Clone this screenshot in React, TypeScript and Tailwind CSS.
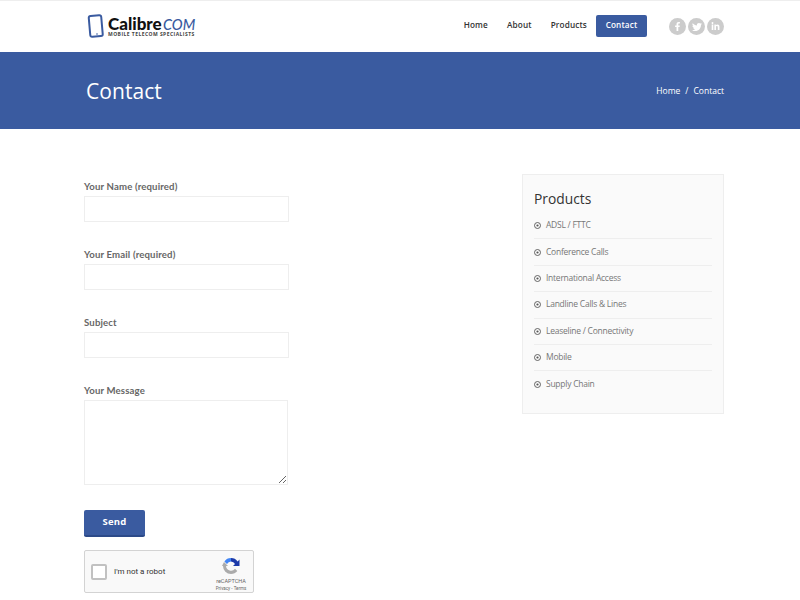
import { FaFacebookF, FaLinkedinIn, FaTwitter } from "react-icons/fa"

const links = ["ADSL / FTTC", "Conference Calls", "International Access", "Landline Calls & Lines", "Leaseline / Connectivity", "Mobile", "Supply Chain"]

function Field({ label, area }: { label: string; area?: boolean }) {
  return (
    <div className="mb-[25px]">
      <label className="block text-[9.6px] leading-[16px] h-[14px] font-bold text-[#666] mb-[3px] tracking-[0.15px] font-['Lato',sans-serif]">{label}</label>
      {area ? (
        <textarea className="block w-[204px] h-[85px] border border-[#eeeeee] bg-white outline-none" />
      ) : (
        <input className="block w-[205px] h-[26px] border border-[#eeeeee] bg-white outline-none" />
      )}
    </div>
  )
}

function Social({ children }: { children: React.ReactNode }) {
  return <div className="w-[17px] h-[17px] rounded-full bg-[#cccccc] flex items-center justify-center text-white">{children}</div>
}

export default function App() {
  return (
    <div className="w-[800px] h-[600px] overflow-hidden bg-white font-['Open_Sans',sans-serif]">
      <header className="h-[52px] border-t border-[#eeeeee] flex items-center pl-[87px] pr-[76px]">
        <div className="flex items-center w-[109px]">
          <svg width="18" height="24" viewBox="0 0 18 24" className="mr-[3px] -mt-px shrink-0">
            <rect x="2.5" y="1.5" width="12.5" height="21" rx="2" transform="rotate(-5 9 12)" fill="#ffffff" stroke="#3a5ba0" strokeWidth="2" />
            <circle cx="10" cy="20" r="0.8" fill="#3a5ba0" />
          </svg>
          <div className="flex flex-col">
            <div className="flex items-baseline leading-[14px] h-[14px]">
              <span className="text-[17px] font-black text-[#111] font-['Lato',sans-serif] leading-[14px] w-[55px]">Calibre</span>
              <span className="text-[14.5px] italic text-[#3a5ba0] font-['Lato',sans-serif] font-medium leading-[14px]">COM</span>
            </div>
            <span className="text-[5px] leading-[6px] h-[6px] font-bold text-[#444] whitespace-nowrap tracking-[0.45px]">MOBILE TELECOM SPECIALISTS</span>
          </div>
        </div>
        <nav className="ml-auto flex items-center text-[8.2px] font-semibold text-[#333] tracking-[0.15px] mb-[2px]">
          <span className="mr-[19px]">Home</span>
          <span className="mr-[19px]">About</span>
          <span className="mr-[9px]">Products</span>
          <span className="w-[51px] h-[22px] bg-[#3a5ba0] text-white rounded-[2px] flex items-center justify-center">Contact</span>
        </nav>
        <div className="flex ml-[22px] gap-[2px]">
          <Social><FaFacebookF size={9} /></Social>
          <Social><FaTwitter size={10} /></Social>
          <Social><FaLinkedinIn size={9} /></Social>
        </div>
      </header>
      <section className="h-[77px] pt-[2px] bg-[#3a5ba0] flex items-center justify-between pl-[86px] pr-[76px]">
        <h1 className="text-[21px] text-white tracking-[0.05px]">Contact</h1>
        <div className="text-[8.5px] text-white flex gap-[5px]">
          <span>Home</span><span>/</span><span>Contact</span>
        </div>
      </section>
      <main className="flex justify-between pl-[84px] pr-[76px] pt-[45px]">
        <form className="pt-[5px]">
          <Field label="Your Name (required)" />
          <Field label="Your Email (required)" />
          <Field label="Subject" />
          <Field label="Your Message" area />
          <button type="button" className="w-[61px] h-[27px] bg-[#3a5ba0] border-b-2 border-[#2c4a88] rounded-[2px] text-white text-[9.5px] font-bold tracking-[0.2px] block">Send</button>
          <div className="mt-[13px] w-[170px] h-[43px] bg-[#f9f9f9] border border-[#d3d3d3] rounded-[2px] flex items-center pl-[6px] pr-[6px]">
            <div className="w-4 h-4 bg-white border-2 border-[#c1c1c1] rounded-[2px]" />
            <span className="ml-[7px] text-[8px] text-[#333] font-['Roboto',sans-serif]">I'm not a robot</span>
            <div className="ml-auto flex flex-col items-center w-[32px] mt-[5px]">
              <svg width="18" height="18" viewBox="0 0 18 18" className="mb-[2px]">
                <path d="M9 1a8 8 0 0 1 6.6 3.4L17.5 2.5v6.5h-6.500l2-2A5 5 0 0 0 9 4.500z" fill="#1c3aa9" />
                <path d="M9 1a8 8 0 0 0-6.600 3.400L5 7a5 5 0 0 1 4-2.500z" fill="#4285f4" />
                <path d="M1 9a8 8 0 0 0 8 8c2.600 0 4.800-1.200 6.300-3l-2.300-2.300A5 5 0 0 1 4 9h2L2 5 0 9z" fill="#ababab" />
              </svg>
              <span className="text-[5.500px] leading-[8px] text-[#666] font-['Roboto',sans-serif] mb-px">reCAPTCHA</span>
              <span className="text-[4.500px] leading-[6px] text-[#666] font-['Roboto',sans-serif]">Privacy - Terms</span>
            </div>
          </div>
        </form>
        <aside className="w-[202px] h-[240px] bg-[#fafafa] border border-[#eeeeee] pt-[14px] px-[11px]">
          <h3 className="text-[13.800px] leading-[19px] text-[#333] mb-[5px]">Products</h3>
          <ul>
            {links.map((l) => (
              <li key={l} className="h-[26.400px] flex items-center border-b border-[#eeeeee] last:border-b-0 text-[8.500px] tracking-[-0.250px] text-[#777]">
                <svg width="7" height="7" viewBox="0 0 7 7" className="mr-[5px]">
                  <circle cx="3.500" cy="3.500" r="3" fill="none" stroke="#555" strokeWidth="0.900" />
                  <circle cx="3.500" cy="3.500" r="1.100" fill="#555" />
                </svg>
                {l}
              </li>
            ))}
          </ul>
        </aside>
      </main>
    </div>
  )
}
